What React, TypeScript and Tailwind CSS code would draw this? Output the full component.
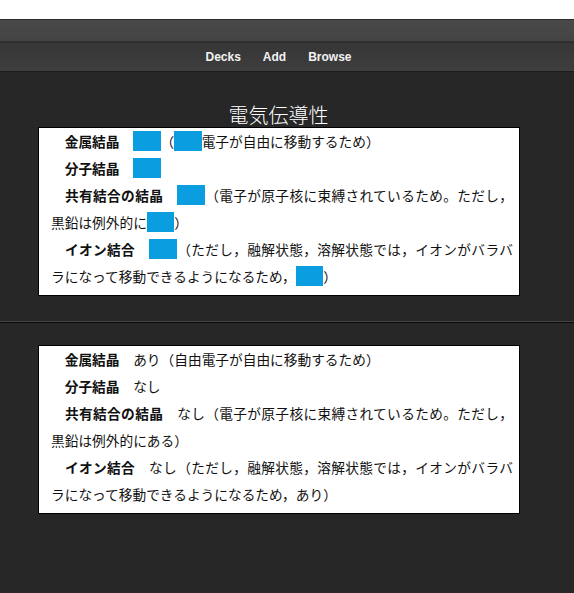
import React from "react";

const jp = { fontFamily: '"Noto Sans CJK JP", "Noto Sans", sans-serif' };
const S = "\u3000";

function Hide({ t }: { t: string }) {
  return <span className="bg-[#0a9ddf] text-transparent">{t}</span>;
}

function Para({ children }: { children: React.ReactNode }) {
  return <p className="text-justify">{children}</p>;
}

function Card({ hidden }: { hidden: boolean }) {
  const A = (t: string) => (hidden ? <Hide t={t} /> : t);
  return (
    <div
      className="ml-[38px] w-[482px] border border-black bg-white pl-[12px] pr-[6px] pb-[5px] text-[13.7px] leading-[27px] text-[#111] [text-spacing-trim:space-all]"
      style={jp}
    >
      <Para>
        {S}
        <b>金属結晶</b>
        {S}
        {A("あり")}（{A("自由")}電子が自由に移動するため）
      </Para>
      <Para>
        {S}
        <b>分子結晶</b>
        {S}
        {A("なし")}
      </Para>
      <Para>
        {S}
        <b>共有結合の結晶</b>
        {S}
        {A("なし")}
        （電子が原子核に束縛されているため。ただし，黒鉛は例外的に{A("ある")}）
      </Para>
      <Para>
        {S}
        <b>イオン結合</b>
        {S}
        {A("なし")}
        （ただし，融解状態，溶解状態では，イオンがバラバラになって移動できるようになるため，{A("あり")}）
      </Para>
    </div>
  );
}

export default function App() {
  return (
    <div className="min-h-[593px] w-[574px] bg-[#272727]">
      <div className="h-[19px] bg-white" />
      <div className="h-[22px] border-t border-[#2c2c2c] bg-gradient-to-b from-[#494949] to-[#444444]" />
      <div
        className="flex h-[31px] items-center justify-center gap-[22px] border-t-2 border-b border-t-[#2f2f2f] border-b-[#1c1c1c] bg-gradient-to-b from-[#363636] to-[#3e3e3e] pr-[17px] text-[12px] font-bold text-[#f2f2f2]"
        style={{ fontFamily: '"Liberation Sans", Arial, sans-serif' }}
      >
        <span>Decks</span>
        <span>Add</span>
        <span>Browse</span>
      </div>
      <div className="pt-[31px]">
        <div
          className="mr-[17px] h-[24px] text-center text-[20px] font-light leading-[24px] text-white"
          style={jp}
        >
          電気伝導性
        </div>
        <Card hidden={true} />
        <div className="mt-[25px] h-[2px] border-t border-t-[#454545] bg-[#0a0a0a]" />
        <div className="pt-[22px] pb-[79px]">
          <Card hidden={false} />
        </div>
      </div>
    </div>
  );
}
